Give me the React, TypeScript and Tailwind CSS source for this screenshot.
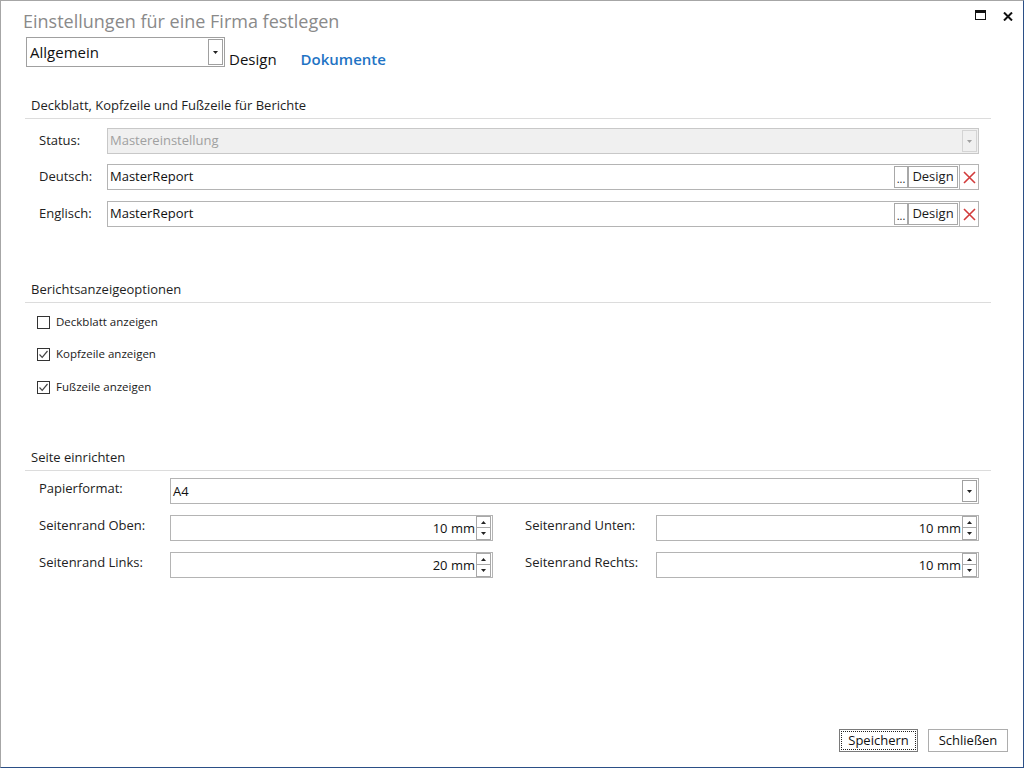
import React from "react";

function Tri({ up, color = "#222" }: { up?: boolean; color?: string }) {
  return (
    <svg width="5" height="3" viewBox="0 0 5 3">
      <path d={up ? "M0 3 L2.5 0 L5 3Z" : "M0 0 L5 0 L2.5 3Z"} fill={color} />
    </svg>
  );
}

function SectionHeader({ title }: { title: string }) {
  return (
    <div className="ml-[24px] mr-[32px] border-b border-[#dcdcdc] pl-[6px] pb-[4px] text-[13px] leading-[18px] text-[#1e1e1e]">
      {title}
    </div>
  );
}

function ReportRow({ label, value }: { label: string; value: string }) {
  return (
    <div className="flex h-[26px] items-center">
      <div className="w-[68px] text-[13px] text-[#222]">{label}</div>
      <div className="flex h-[26px] flex-1 items-center border border-[#b4b4b4] bg-white">
        <div className="flex-1 pl-[2px] text-[13px] text-[#111]">{value}</div>
        <div className="flex h-[22px] w-[14px] items-end justify-center border border-[#a8a8a8] pb-[3px] text-[11px] leading-[10px] text-[#222]">
          ...
        </div>
        <div className="mr-[1px] flex h-[22px] w-[50px] items-center justify-center border border-[#a8a8a8] text-[13px] text-[#1a1a1a]">
          Design
        </div>
      </div>
      <div className="flex h-[26px] w-[19px] items-center justify-center border border-l-0 border-[#b4b4b4]">
        <svg width="13" height="13" viewBox="0 0 13 13">
          <path d="M1 1 L12 12 M12 1 L1 12" stroke="#d23b3b" strokeWidth="1.6" />
        </svg>
      </div>
    </div>
  );
}

function Check({ checked, label }: { checked?: boolean; label: string }) {
  return (
    <div className="flex h-[20px] items-center gap-[6px]">
      <div className="flex h-[13px] w-[13px] items-center justify-center border border-[#333] bg-white">
        {checked && (
          <svg width="11" height="11" viewBox="0 0 11 11">
            <path d="M1.5 5.5 L4.2 8.3 L9.5 2" fill="none" stroke="#444" strokeWidth="1.2" />
          </svg>
        )}
      </div>
      <span className="text-[11.5px] text-[#1a1a1a]">{label}</span>
    </div>
  );
}

function SpinField({ label, value }: { label: string; value: string }) {
  return (
    <div className="flex flex-1 items-start">
      <div className="w-[131px] pt-[1px] text-[13px] leading-[18px] text-[#222]">{label}</div>
      <div className="flex h-[26px] flex-1 items-center border border-[#b4b4b4] bg-white">
        <div className="flex-1 pr-[1px] pt-[2px] text-right text-[13px] text-[#111]">{value}</div>
        <div className="mr-[1px] flex h-[24px] w-[15px] flex-col">
          <div className="flex h-[12px] items-center justify-center border border-[#a8a8a8]">
            <Tri up />
          </div>
          <div className="flex h-[12px] items-center justify-center border border-t-0 border-[#a8a8a8]">
            <Tri />
          </div>
        </div>
      </div>
    </div>
  );
}

export default function App() {
  return (
    <div className="flex h-[768px] w-[1024px] flex-col overflow-hidden border-t border-l border-r border-b border-t-[#a6a6a6] border-l-[#a6a6a6] border-r-[#2b4f86] border-b-[#2b4f86] bg-white font-['Open_Sans',sans-serif]">
      {/* Title bar */}
      <div className="flex h-[36px] items-start justify-between">
        <div className="pl-[22px] pt-[7px] text-[18px] leading-[26px] text-[#8a8a8a]">
          Einstellungen für eine Firma festlegen
        </div>
        <div className="flex items-start gap-[17px] pr-[10px] pt-[9px]">
          <svg width="11" height="10" viewBox="0 0 11 10">
            <rect x="0.5" y="0.5" width="10" height="9" fill="none" stroke="#111" strokeWidth="1" />
            <rect x="0" y="0" width="11" height="3" fill="#111" />
          </svg>
          <svg width="10" height="9" viewBox="0 0 10 9" className="mt-[2px]">
            <path d="M1 0.5 L9 8.5 M9 0.5 L1 8.5" stroke="#111" strokeWidth="2" />
          </svg>
        </div>
      </div>

      {/* Tabs */}
      <div className="flex items-end">
        <div className="ml-[25px] flex h-[30px] w-[199px] items-center border border-[#a0a0a0]">
          <div className="flex-1 pl-[3px] text-[15px] text-[#111]">Allgemein</div>
          <div className="mr-[1px] flex h-[26px] w-[15px] items-center justify-center border border-[#a0a0a0]">
            <Tri />
          </div>
        </div>
        <div className="ml-[4px] -mb-[2px] text-[15px] leading-[20px] text-[#111]">Design</div>
        <div className="ml-[24px] -mb-[2px] text-[15px] font-semibold leading-[20px] text-[#1f74c4]">Dokumente</div>
      </div>

      {/* Section 1 */}
      <div className="mt-[29px]">
        <SectionHeader title="Deckblatt, Kopfzeile und Fußzeile für Berichte" />
        <div className="mt-[9px] flex flex-col gap-[10px] pl-[38px] pr-[44px]">
          <div className="flex h-[26px] items-center">
            <div className="w-[68px] text-[13px] text-[#222]">Status:</div>
            <div className="flex h-[26px] flex-1 items-center border border-[#c8c8c8] bg-[#f0f0f0]">
              <div className="flex-1 pl-[2px] text-[13px] text-[#a0a0a0]">Mastereinstellung</div>
              <div className="mr-[1px] flex h-[22px] w-[15px] items-center justify-center border border-[#d4d4d4]">
                <Tri color="#a0a0a0" />
              </div>
            </div>
          </div>
          <ReportRow label="Deutsch:" value="MasterReport" />
          <div className="mt-[1px]">
            <ReportRow label="Englisch:" value="MasterReport" />
          </div>
        </div>
      </div>

      {/* Section 2 */}
      <div className="mt-[53px]">
        <SectionHeader title="Berichtsanzeigeoptionen" />
        <div className="mt-[9px] flex flex-col gap-[12px] pl-[36px]">
          <Check label="Deckblatt anzeigen" />
          <Check checked label="Kopfzeile anzeigen" />
          <div className="mt-[1px]">
            <Check checked label="Fußzeile anzeigen" />
          </div>
        </div>
      </div>

      {/* Section 3 */}
      <div className="mt-[51px]">
        <SectionHeader title="Seite einrichten" />
        <div className="mt-[7px] flex flex-col gap-[11px] pl-[38px] pr-[44px]">
          <div className="flex items-start">
            <div className="w-[131px] pt-[1px] text-[13px] leading-[18px] text-[#222]">Papierformat:</div>
            <div className="flex h-[26px] flex-1 items-center border border-[#b4b4b4] bg-white">
              <div className="flex-1 pl-[2px] pt-[2px] text-[13px] text-[#111]">A4</div>
              <div className="mr-[1px] flex h-[22px] w-[15px] items-center justify-center border border-[#a0a0a0]">
                <Tri />
              </div>
            </div>
          </div>
          <div className="flex gap-[32px]">
            <SpinField label="Seitenrand Oben:" value="10 mm" />
            <SpinField label="Seitenrand Unten:" value="10 mm" />
          </div>
          <div className="flex gap-[32px]">
            <SpinField label="Seitenrand Links:" value="20 mm" />
            <SpinField label="Seitenrand Rechts:" value="10 mm" />
          </div>
        </div>
      </div>

      <div className="flex-1" />

      {/* Footer */}
      <div className="flex justify-end gap-[10px] pb-[15px] pr-[15px]">
        <button className="h-[23px] w-[79px] border border-[#7a7a7a] bg-white p-[1px]">
          <div className="flex h-full w-full items-center justify-center border border-dotted border-[#222] text-[13px] text-[#111]">
            Speichern
          </div>
        </button>
        <button className="flex h-[23px] w-[80px] items-center justify-center border border-[#adadad] bg-white text-[13px] text-[#111]">
          Schließen
        </button>
      </div>
    </div>
  );
}
